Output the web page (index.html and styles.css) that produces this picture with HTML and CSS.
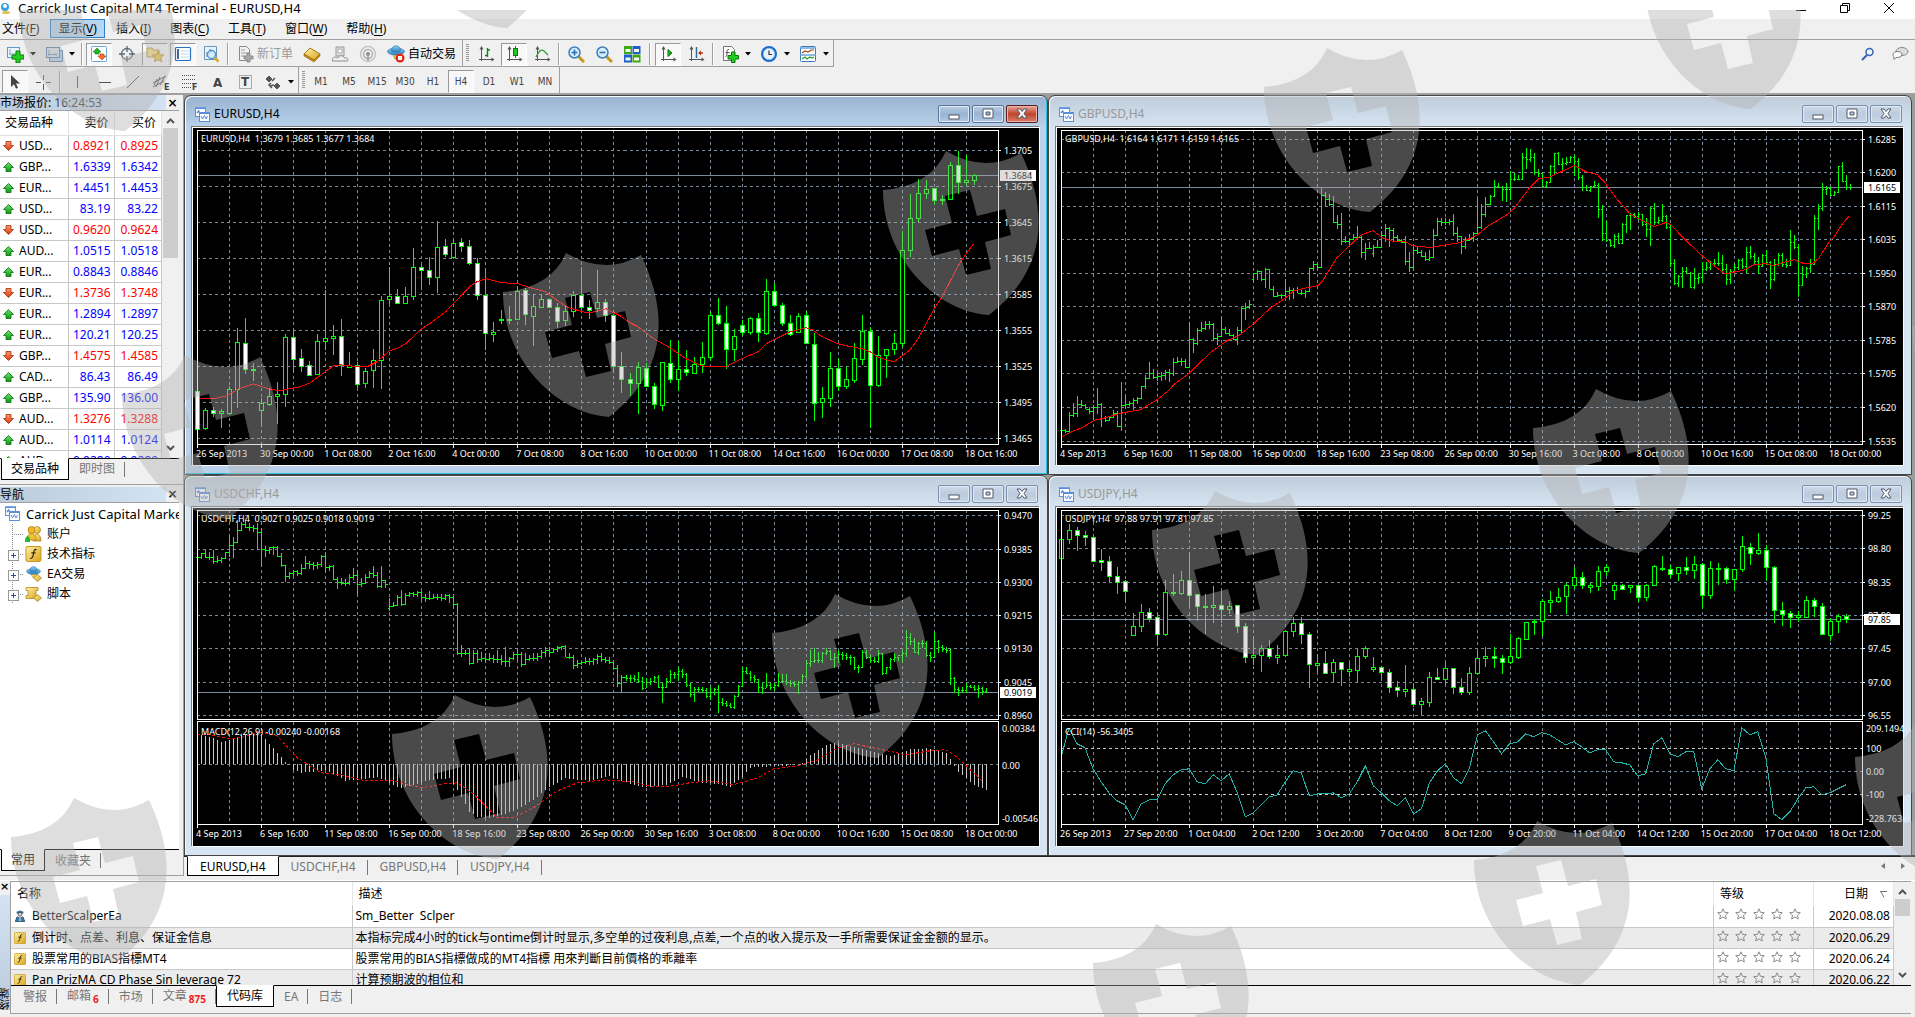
FILE: index.html
```html
<!DOCTYPE html>
<html lang="zh-CN">
<head>
<meta charset="utf-8">
<title>Carrick Just Capital MT4 Terminal - EURUSD,H4</title>
<link rel="stylesheet" href="styles.css">
</head>
<body>
<svg class="defs" aria-hidden="true">
  <defs>
    <linearGradient id="gGreen" x1="0" y1="0" x2="0" y2="1"><stop offset="0" stop-color="#6be36b"/><stop offset="1" stop-color="#0a9a12"/></linearGradient>
    <linearGradient id="gRed" x1="0" y1="0" x2="0" y2="1"><stop offset="0" stop-color="#ff9a70"/><stop offset="1" stop-color="#d8380c"/></linearGradient>
    <linearGradient id="gGold" x1="0" y1="0" x2="1" y2="1"><stop offset="0" stop-color="#fff2a8"/><stop offset="1" stop-color="#d9a21a"/></linearGradient>
    <linearGradient id="gBlue" x1="0" y1="0" x2="0" y2="1"><stop offset="0" stop-color="#8fd0f5"/><stop offset="1" stop-color="#2a7fc0"/></linearGradient>
    <symbol id="up" viewBox="0 0 11 10"><path d="M5.500 .5 10.500 5.500H8V9.500H3V5.500H.5Z" fill="url(#gGreen)" stroke="#0a6a10" stroke-width=".8"/></symbol>
    <symbol id="down" viewBox="0 0 11 10"><path d="M5.500 9.500 10.500 4.500H8V.5H3V4.500H.5Z" fill="url(#gRed)" stroke="#a03008" stroke-width=".8"/></symbol>
    <symbol id="star" viewBox="0 0 12 12"><path d="M6 .8 7.500 4.300 11.300 4.700 8.500 7.200 9.300 11 6 9 2.700 11 3.500 7.200 .7 4.700 4.500 4.300Z" fill="none" stroke="#8c8c8c" stroke-width="1"/></symbol>
    <symbol id="charts" viewBox="0 0 15 15"><rect x=".5" y="1.500" width="10" height="8" fill="#fff" stroke="#5a8fe0"/><path d="M0 1h11M2 6l1.500-2 1.500 2" stroke="#5a8fe0" stroke-width="1.500" fill="none"/><rect x="4.500" y="5.500" width="10" height="9" fill="#fff" stroke="#5a8fe0"/><path d="M4 6h11" stroke="#5a8fe0" stroke-width="2"/><path d="M6 9l1.500 3 2-3.500 1.500 3.500 1.500-3" stroke="#5a8fe0" fill="none"/></symbol>
    <symbol id="func" viewBox="0 0 15 15"><rect x=".5" y=".5" width="14" height="14" rx="1.500" fill="url(#gGold)" stroke="#c79a20"/><path d="M10.500 3.500c-2-.8-2.600.6-3 3.500s-1 5-3 4.500M5.500 6.500h4" stroke="#3a2c00" stroke-width="1.200" fill="none"/></symbol>
    <symbol id="hat" viewBox="0 0 18 17"><path d="M5 8h9l-2 5-4 1z" fill="#f3cf5a" stroke="#b98d1c" stroke-width=".7"/><ellipse cx="9" cy="6.500" rx="8.500" ry="3.500" fill="url(#gBlue)" stroke="#2a6fa8" stroke-width=".6"/><path d="M4.500 6c0-7 9-7 9 0-2 1.500-7 1.500-9 0z" fill="url(#gBlue)" stroke="#2a6fa8" stroke-width=".6"/></symbol>
    <symbol id="caret" viewBox="0 0 7 4"><path d="M0 0h6L3 3.500Z" fill="#000"/></symbol>
    <symbol id="axes" viewBox="0 0 18 18"><path d="M4.500 3v13M2 14.500h14" stroke="#555"/><path d="M4.500 1 2.500 4.500h4zM17.500 14.500l-3-2v4z" fill="#555"/></symbol>
    <symbol id="expert" viewBox="0 0 14 14"><path d="M3 2l4-1.500L11 2v2H3z" fill="#2c6f99"/><circle cx="7" cy="5" r="2.200" fill="#f0d8b8" stroke="#345"/><path d="M1.500 13.500 3.500 8l3.500 1.500L10.500 8l2 5.500z" fill="#3c7ca4" stroke="#234f6c"/><path d="M7 9v4" stroke="#fff"/></symbol>
    <path id="shield" fill-rule="evenodd" d="M0 0Q48-4 63-39Q102-16 138-37C170 30 158 85 106 125C55 122 0 70 0 0ZM62 6 69 33 42 40 49 66 76 59 83 85 108 79 102 52 128 45 122 19 94 26 87 0Z"/>
  </defs>
</svg>

<header class="titlebar">
  <svg class="app-icon" viewBox="0 0 12 14"><circle cx="5" cy="6" r="4" fill="#3aa0d8"/><circle cx="5" cy="5" r="2" fill="#fff"/><ellipse cx="6" cy="11.500" rx="4" ry="1.500" fill="#e0c04a"/></svg>
  <h1>Carrick Just Capital MT4 Terminal - EURUSD,H4</h1>
  <div class="caption">
    <button aria-label="最小化"><svg viewBox="0 0 10 10"><path d="M0 7.500h10"/></svg></button>
    <button aria-label="还原"><svg viewBox="0 0 10 10"><path d="M.5 2.500h7v7h-7zM2.500 2.500v-2h7v7h-2"/></svg></button>
    <button aria-label="关闭"><svg viewBox="0 0 10 10"><path d="M0 0l10 10M10 0 0 10"/></svg></button>
  </div>
</header>

<nav class="menu">
  <button>文件(<u>F</u>)</button><button class="open">显示(<u>V</u>)</button><button>插入(<u>I</u>)</button><button>图表(<u>C</u>)</button><button>工具(<u>T</u>)</button><button>窗口(<u>W</u>)</button><button>帮助(<u>H</u>)</button>
</nav>

<div class="bar">
  <div class="strip">
    <button class="tool drop" aria-label="新图表"><svg class="ic" viewBox="0 0 18 18"><rect x="1.500" y="2.500" width="12" height="10" fill="#eef6fc" stroke="#5a9ccc"/><path d="M4 4v6M3 9h7" stroke="#7aa8c8"/><path d="M10 6h4v4h4v4h-4v4h-4v-4H6v-4h4z" fill="#22d022" stroke="#087a08"/></svg><svg class="caret"><use href="#caret"/></svg></button>
    <button class="tool drop" aria-label="模板组"><svg class="ic" viewBox="0 0 18 18"><path d="M4.500 5.500h13v11h-13z" fill="#bcd2e6" stroke="#5a86b0"/><rect x="1.500" y="2.500" width="13" height="10" fill="#d8e6f2" stroke="#5a86b0"/><path d="M4 5v6M3 9.500h9M11 8v3" stroke="#7a98b4"/></svg><svg class="caret"><use href="#caret"/></svg></button>
    <i class="sep"></i>
    <button class="tool on" aria-label="市场报价"><svg class="ic" viewBox="0 0 18 18"><rect x="1.500" y="1.500" width="15" height="15" rx="1" fill="#fff" stroke="#6aa8dc"/><path d="M7 3l4 4H9v2H5V7H3z" fill="#25b825" stroke="#087a08" stroke-width=".6"/><path d="M12 15l4-4h-2V9h-4v2H8z" fill="#ff6a30" stroke="#b03808" stroke-width=".6"/></svg></button>
    <button class="tool" aria-label="数据窗口"><svg class="ic" viewBox="0 0 18 18"><circle cx="9" cy="9" r="5.500" fill="none" stroke="#5a6a74" stroke-width="1.300"/><path d="M9 1v6M9 11v6M1 9h6M11 9h6" stroke="#5a6a74" stroke-width="1.300"/></svg></button>
    <button class="tool on" aria-label="导航"><svg class="ic" viewBox="0 0 18 18"><path d="M1 3h5l1 2h6v7H1z" fill="#f8df8c" stroke="#b89a3c"/><path d="M12 6l1.700 3.700 4 .4-3 2.600 1 4L12 14.600 8.400 16.700l1-4-3-2.600 4-.4z" fill="#f6c648" stroke="#a88420" stroke-width=".8"/></svg></button>
    <button class="tool on" aria-label="终端"><svg class="ic" viewBox="0 0 18 18"><rect x="1.500" y="2.500" width="15" height="13" rx="1" fill="#fff" stroke="#2a70bc" stroke-width="1.200"/><path d="M4 4v10" stroke="#1c3f7e" stroke-width="1.600"/><path d="M7 6h8M7 9h8M7 12h8" stroke="#c0d4ea"/></svg></button>
    <button class="tool" aria-label="策略测试"><svg class="ic" viewBox="0 0 18 18"><path d="M2.500 1.500h12v13h-12z" fill="#e8f2fa" stroke="#6a94b4"/><path d="M5 12V7M8 9V4" stroke="#4a7aa4"/><path d="M12.500 12.500l4 4" stroke="#d8a828" stroke-width="2.600"/><circle cx="9.500" cy="9.500" r="4" fill="#d4ecfa" fill-opacity=".8" stroke="#4a94cc" stroke-width="1.300"/></svg></button>
    <i class="sep"></i>
    <button class="tool text off"><svg class="ic" viewBox="0 0 18 18"><path d="M3.500 1.500h7l3 3v11h-10z" fill="#f2f2f2" stroke="#8a8a8a"/><path d="M5 5h4M5 8h6M5 11h4" stroke="#9a9a9a"/><path d="M11 8h3v3h3v3h-3v3h-3v-3H8v-3h3z" fill="#a8a8a8" stroke="#787878" stroke-width=".7"/></svg>新订单</button>
    <button class="tool" aria-label="MetaEditor"><svg class="ic" viewBox="0 0 18 18"><path d="M1 9l6-6 10 6-6 6z" fill="url(#gGold)" stroke="#a87a10"/><path d="M1 9v2l10 6 6-6V9l-6 6z" fill="#c88c14" stroke="#946808" stroke-width=".6"/></svg></button>
    <button class="tool" aria-label="社区"><svg class="ic" viewBox="0 0 18 18"><path d="M5 2h8v9H5z" fill="#dedede" stroke="#9a9a9a"/><path d="M7 4h4v4H7z" fill="#fff" stroke="#aaa"/><path d="M1.500 16c-1-4 3-5 5-3 2-3 6-3 7 0 3-.5 4 1 3 3z" fill="#eee" stroke="#8c8c8c"/></svg></button>
    <button class="tool" aria-label="信号"><svg class="ic" viewBox="0 0 18 18"><circle cx="9" cy="9" r="7.500" fill="none" stroke="#c4c4c4" stroke-width="1.500"/><circle cx="9" cy="9" r="4.500" fill="none" stroke="#b0b0b0" stroke-width="1.500"/><circle cx="9" cy="9" r="2" fill="#888"/><path d="M9 9v7" stroke="#999" stroke-width="1.500"/></svg></button>
    <button class="tool text auto"><svg class="ic" viewBox="0 0 18 18"><use href="#hat" width="18" height="17"/><circle cx="13" cy="13" r="4.500" fill="#e02a14"/><rect x="11" y="11" width="4" height="4" fill="#fff"/></svg>自动交易</button>
  </div>
  <div class="strip grip">
    <button class="tool" aria-label="柱状图"><svg class="ic" viewBox="0 0 18 18"><use href="#axes"/><path d="M10.500 3v9M8 10.500h2.500M10.500 5h2.500" stroke="#0a8a0a" stroke-width="1.400"/></svg></button>
    <button class="tool on" aria-label="蜡烛图"><svg class="ic" viewBox="0 0 18 18"><use href="#axes"/><path d="M10.500 1v12" stroke="#0a8a0a"/><rect x="8.500" y="3.500" width="4" height="7" fill="#22c822" stroke="#0a7a0a"/></svg></button>
    <button class="tool" aria-label="折线图"><svg class="ic" viewBox="0 0 18 18"><use href="#axes"/><path d="M3 12c3-7 6-8 8-6l4 4" stroke="#3a9a3a" stroke-width="1.300" fill="none"/></svg></button>
    <i class="sep"></i>
    <button class="tool" aria-label="放大"><svg class="ic" viewBox="0 0 18 18"><path d="M11 11l6 6" stroke="#c8981c" stroke-width="3"/><circle cx="7.500" cy="7.500" r="5.500" fill="#d8eefc" stroke="#3c7fbc" stroke-width="1.500"/><path d="M7.500 4.500v6M4.500 7.500h6" stroke="#2c6fae" stroke-width="1.600"/></svg></button>
    <button class="tool" aria-label="缩小"><svg class="ic" viewBox="0 0 18 18"><path d="M11 11l6 6" stroke="#c8981c" stroke-width="3"/><circle cx="7.500" cy="7.500" r="5.500" fill="#d8eefc" stroke="#3c7fbc" stroke-width="1.500"/><path d="M4.500 7.500h6" stroke="#2c6fae" stroke-width="1.600"/></svg></button>
    <button class="tool" aria-label="平铺窗口"><svg class="ic" viewBox="0 0 18 18"><path d="M1 1h8v8H1zM9.500 9.500h8v8h-8z" fill="#3fa614"/><path d="M9.500 1h8v8h-8zM1 9.500h8v8H1z" fill="#1f5fc8"/><path d="M2.500 4h5v3h-5zM11 4h5v3h-5zM2.500 12.500h5v3h-5zM11 12.500h5v3h-5z" fill="#f4f8ee"/></svg></button>
    <i class="sep wide"></i>
    <button class="tool on" aria-label="自动滚动"><svg class="ic" viewBox="0 0 18 18"><use href="#axes"/><path d="M9 4.500l4 3.500-4 3.500z" fill="#22b022" stroke="#087a08"/></svg></button>
    <button class="tool" aria-label="图表平移"><svg class="ic" viewBox="0 0 18 18"><use href="#axes"/><path d="M9.500 2v11" stroke="#2c6f9c" stroke-width="1.500"/><path d="M16 8h-4" stroke="#b03808" stroke-width="1.500"/><path d="M14 5.500v5L11 8z" fill="#b03808"/></svg></button>
    <i class="sep"></i>
    <button class="tool drop" aria-label="技术指标"><svg class="ic" viewBox="0 0 18 18"><path d="M2.500 1.500h8l3 3v11h-11z" fill="#fff" stroke="#777"/><path d="M8 4.500c-2-.5-2 1-2 3s0 4-1.500 4M4.500 7.500h4" stroke="#555" fill="none"/><path d="M10.500 7h3.500v3.500h3.500V14H14v3.500h-3.500V14H7v-3.500h3.500z" fill="#22d022" stroke="#087a08"/></svg><svg class="caret"><use href="#caret"/></svg></button>
    <button class="tool drop" aria-label="时段"><svg class="ic" viewBox="0 0 18 18"><circle cx="9" cy="9" r="8" fill="#1668c8"/><circle cx="9" cy="9" r="5.700" fill="#e8f2fa" stroke="#8ac0f0"/><path d="M9 5.500V9.500h3" stroke="#333" stroke-width="1.200" fill="none"/></svg><svg class="caret"><use href="#caret"/></svg></button>
    <button class="tool drop" aria-label="模板"><svg class="ic" viewBox="0 0 18 18"><rect x="1.500" y="1.500" width="15" height="15" rx="1" fill="#fff" stroke="#3a7abc"/><path d="M1 3h16M1 10h16" stroke="#6aa4dc" stroke-width="1.500"/><path d="M3 8l3-2 3 1 3-2h3" stroke="#a84020" fill="none" stroke-width="1.200"/><path d="M3 14l3-2 2 2 3-2 2 1 2-1" stroke="#2a9a2a" fill="none" stroke-width="1.200"/></svg><svg class="caret"><use href="#caret"/></svg></button>
  </div>
  <div class="right-tools">
    <button class="tool" aria-label="搜索"><svg class="ic" viewBox="0 0 18 18"><path d="M8 10l-5 5" stroke="#3a62b8" stroke-width="2.200"/><circle cx="10.500" cy="7" r="3.500" fill="#eef4fc" stroke="#3a62b8" stroke-width="1.500"/></svg></button>
    <button class="tool" aria-label="聊天"><svg class="ic" viewBox="0 0 18 18"><ellipse cx="11" cy="6.500" rx="6" ry="4" fill="#ddd" stroke="#888"/><path d="M2 9.500c0-4 9-4 9 0 0 3-4 3-6 3l-2 2v-2.500c-1-.8-1-1.500-1-2.500z" fill="#fafafa" stroke="#777"/></svg></button>
  </div>
</div>

<div class="bar second">
  <div class="strip lines">
    <button class="tool on" aria-label="光标"><svg class="ic" viewBox="0 0 18 18"><path d="M5 2v12l3-2.700 2 4.500 2-1-2-4.300h4z" fill="#444"/></svg></button>
    <button class="tool" aria-label="十字线"><svg class="ic" viewBox="0 0 18 18"><path d="M9.500 2v5M9.500 11v6M2 9.500h5M12 9.500h5" stroke="#555"/></svg></button>
    <i class="sep"></i>
    <button class="tool" aria-label="垂直线"><svg class="ic" viewBox="0 0 18 18"><path d="M9.500 3v12" stroke="#555"/></svg></button>
    <button class="tool" aria-label="水平线"><svg class="ic" viewBox="0 0 18 18"><path d="M3 9.500h12" stroke="#555"/></svg></button>
    <button class="tool" aria-label="趋势线"><svg class="ic" viewBox="0 0 18 18"><path d="M3 15 15 3" stroke="#555"/></svg></button>
    <button class="tool" aria-label="通道"><svg class="ic" viewBox="0 0 18 18"><path d="M1 10 14 3M1 14 12 8M4 14 8 4M8 12l5-9M2 12l3-6" stroke="#555"/><text x="12" y="17">E</text></svg></button>
    <button class="tool" aria-label="斐波那契"><svg class="ic" viewBox="0 0 18 18"><path d="M2 2.500h14M2 6.500h14M2 10.500h14M2 14.500h9" stroke="#555" stroke-dasharray="1 1"/><text x="12" y="17">F</text></svg></button>
    <button class="tool" aria-label="文字"><svg class="ic" viewBox="0 0 18 18"><text class="glyph" x="5" y="14">A</text></svg></button>
    <button class="tool" aria-label="文字标签"><svg class="ic" viewBox="0 0 18 18"><rect x="3.500" y="2.500" width="12" height="13" fill="none" stroke="#666" stroke-dasharray="1 1"/><text class="glyph" x="5" y="13">T</text></svg></button>
    <button class="tool drop" aria-label="箭头"><svg class="ic" viewBox="0 0 18 18"><path d="M5 3l3 3-3 3-3-3zM13 10l3 3-3 3-3-3z" fill="#555" stroke="#555"/><path d="M8 8l3-3M6 13l4-1M8 15l-3-3 2-2" stroke="#555" stroke-width="1.500" fill="none"/></svg><svg class="caret"><use href="#caret"/></svg></button>
  </div>
  <div class="strip grip periods">
    <button class="tool">M1</button><button class="tool">M5</button><button class="tool">M15</button><button class="tool">M30</button><button class="tool">H1</button><button class="tool on">H4</button><button class="tool">D1</button><button class="tool">W1</button><button class="tool">MN</button>
  </div>
</div>

<main class="work">
  <aside class="side">
    <section class="dock market">
      <header class="dock-head"><h2>市场报价: <span>16:24:53</span></h2><button aria-label="关闭">×</button></header>
      <div class="scroller">
        <div class="clip">
          <table class="quotes">
            <colgroup><col class="c-name"><col class="c-bid"><col class="c-ask"></colgroup>
            <thead><tr><th>交易品种</th><th>卖价</th><th>买价</th></tr></thead>
            <tbody>
              <tr class="dn"><td><svg><use href="#down"/></svg>USD...</td><td>0.8921</td><td>0.8925</td></tr>
              <tr><td><svg><use href="#up"/></svg>GBP...</td><td>1.6339</td><td>1.6342</td></tr>
              <tr><td><svg><use href="#up"/></svg>EUR...</td><td>1.4451</td><td>1.4453</td></tr>
              <tr><td><svg><use href="#up"/></svg>USD...</td><td>83.19</td><td>83.22</td></tr>
              <tr class="dn"><td><svg><use href="#down"/></svg>USD...</td><td>0.9620</td><td>0.9624</td></tr>
              <tr><td><svg><use href="#up"/></svg>AUD...</td><td>1.0515</td><td>1.0518</td></tr>
              <tr><td><svg><use href="#up"/></svg>EUR...</td><td>0.8843</td><td>0.8846</td></tr>
              <tr class="dn"><td><svg><use href="#down"/></svg>EUR...</td><td>1.3736</td><td>1.3748</td></tr>
              <tr><td><svg><use href="#up"/></svg>EUR...</td><td>1.2894</td><td>1.2897</td></tr>
              <tr><td><svg><use href="#up"/></svg>EUR...</td><td>120.21</td><td>120.25</td></tr>
              <tr class="dn"><td><svg><use href="#down"/></svg>GBP...</td><td>1.4575</td><td>1.4585</td></tr>
              <tr><td><svg><use href="#up"/></svg>CAD...</td><td>86.43</td><td>86.49</td></tr>
              <tr><td><svg><use href="#up"/></svg>GBP...</td><td>135.90</td><td>136.00</td></tr>
              <tr class="dn"><td><svg><use href="#down"/></svg>AUD...</td><td>1.3276</td><td>1.3288</td></tr>
              <tr><td><svg><use href="#up"/></svg>AUD...</td><td>1.0114</td><td>1.0124</td></tr>
              <tr><td><svg><use href="#up"/></svg>AUD...</td><td>0.9280</td><td>0.9289</td></tr>
            </tbody>
          </table>
        </div>
        <div class="vbar"><svg viewBox="0 0 9 6"><path d="M1 5l3.500-3.500L8 5"/></svg><i class="thumb"></i><svg class="end" viewBox="0 0 9 6"><path d="M1 1l3.500 3.500L8 1"/></svg></div>
      </div>
      <div class="tabs"><button class="active">交易品种</button><button>即时图</button></div>
    </section>
    <section class="dock navi">
      <header class="dock-head"><h2>导航</h2><button aria-label="关闭">×</button></header>
      <ul class="tree">
        <li class="root"><svg class="ti"><use href="#charts"/></svg>Carrick Just Capital Markets</li>
        <li><i class="node leaf"></i><svg class="ti" viewBox="0 0 17 16"><circle cx="12" cy="4" r="3.500" fill="url(#gGold)" stroke="#a87a10" stroke-width=".7"/><path d="M8 15c0-9 8-9 8 0z" fill="url(#gGold)" stroke="#a87a10" stroke-width=".7"/><circle cx="6.500" cy="4" r="3.500" fill="#f0b820" stroke="#a87a10" stroke-width=".7"/><path d="M2 14c0-9 9-9 9 0z" fill="#f0c030" stroke="#a87a10" stroke-width=".7"/><path d="M0 15c0-6 5-6 5-1v2H0z" fill="#22b82a"/></svg>账户</li>
        <li><i class="node plus"></i><svg class="ti"><use href="#func"/></svg>技术指标</li>
        <li><i class="node plus"></i><svg class="ti" viewBox="0 0 17 16"><use href="#hat" width="17" height="14"/><path d="M12.500 8.500l4 3.500-4 3.500-4-3.500z" fill="url(#gGold)" stroke="#a87a10" stroke-width=".7"/></svg>EA交易</li>
        <li><i class="node plus"></i><svg class="ti" viewBox="0 0 17 16"><path d="M1 1.500h12v3h-2v5h2v3H1v-3h2v-5H1z" fill="url(#gGold)" stroke="#b08a20" stroke-width=".8"/><path d="M12.500 8.500l4 3.500-4 3.500-4-3.500z" fill="url(#gGold)" stroke="#a87a10" stroke-width=".7"/></svg>脚本</li>
      </ul>
      <div class="tabs"><button class="active">常用</button><button>收藏夹</button></div>
    </section>
  </aside>

  <section class="desk">
    <div class="windows">
      <article class="win active"><header><svg class="wi"><use href="#charts"/></svg><h2>EURUSD,H4</h2><button aria-label="最小化"><svg viewBox="0 0 12 12"><rect x="1" y="7" width="10" height="4"/></svg></button><button aria-label="最大化"><svg viewBox="0 0 12 12"><path d="M1 1h10v9H1zM4 4h4v3H4z"/></svg></button><button class="x" aria-label="关闭"><svg viewBox="0 0 12 12"><path d="M1 1h3l2 2.500L8 1h3L8 5.500 11 10H8L6 7.500 4 10H1l3-4.500z"/></svg></button></header><svg class="chart" id="eurusd" viewBox="0 0 845 337" preserveAspectRatio="xMinYMin meet"></svg></article>
      <article class="win"><header><svg class="wi"><use href="#charts"/></svg><h2>GBPUSD,H4</h2><button aria-label="最小化"><svg viewBox="0 0 12 12"><rect x="1" y="7" width="10" height="4"/></svg></button><button aria-label="最大化"><svg viewBox="0 0 12 12"><path d="M1 1h10v9H1zM4 4h4v3H4z"/></svg></button><button class="x" aria-label="关闭"><svg viewBox="0 0 12 12"><path d="M1 1h3l2 2.500L8 1h3L8 5.500 11 10H8L6 7.500 4 10H1l3-4.500z"/></svg></button></header><svg class="chart" id="gbpusd" viewBox="0 0 845 337" preserveAspectRatio="xMinYMin meet"></svg></article>
      <article class="win"><header><svg class="wi"><use href="#charts"/></svg><h2>USDCHF,H4</h2><button aria-label="最小化"><svg viewBox="0 0 12 12"><rect x="1" y="7" width="10" height="4"/></svg></button><button aria-label="最大化"><svg viewBox="0 0 12 12"><path d="M1 1h10v9H1zM4 4h4v3H4z"/></svg></button><button class="x" aria-label="关闭"><svg viewBox="0 0 12 12"><path d="M1 1h3l2 2.500L8 1h3L8 5.500 11 10H8L6 7.500 4 10H1l3-4.500z"/></svg></button></header><svg class="chart" id="usdchf" viewBox="0 0 845 337" preserveAspectRatio="xMinYMin meet"></svg></article>
      <article class="win"><header><svg class="wi"><use href="#charts"/></svg><h2>USDJPY,H4</h2><button aria-label="最小化"><svg viewBox="0 0 12 12"><rect x="1" y="7" width="10" height="4"/></svg></button><button aria-label="最大化"><svg viewBox="0 0 12 12"><path d="M1 1h10v9H1zM4 4h4v3H4z"/></svg></button><button class="x" aria-label="关闭"><svg viewBox="0 0 12 12"><path d="M1 1h3l2 2.500L8 1h3L8 5.500 11 10H8L6 7.500 4 10H1l3-4.500z"/></svg></button></header><svg class="chart" id="usdjpy" viewBox="0 0 845 337" preserveAspectRatio="xMinYMin meet"></svg></article>
    </div>
    <div class="tabs desk-tabs"><button class="active">EURUSD,H4</button><button>USDCHF,H4</button><button>GBPUSD,H4</button><button>USDJPY,H4</button><span class="pager"><svg viewBox="0 0 4 6"><path d="M4 0v6L0 3z"/></svg><svg viewBox="0 0 4 6"><path d="M0 0v6l4-3z"/></svg></span></div>
  </section>
</main>

<section class="terminal">
  <div class="spine"><button aria-label="关闭">×</button><span>终端</span></div>
  <div class="term-body">
    <div class="scroller">
      <div class="clip">
        <table class="library">
          <colgroup><col class="c-title"><col><col class="c-rate"><col class="c-date"></colgroup>
          <thead><tr><th>名称</th><th>描述</th><th>等级</th><th>日期<svg viewBox="0 0 7 7"><path d="M0 .5h7M1 1l3 5.500"/></svg></th></tr></thead>
          <tbody>
            <tr><td><svg><use href="#expert"/></svg>BetterScalperEa</td><td class="pre">Sm_Better  Sclper</td><td class="stars"><svg><use href="#star"/></svg><svg><use href="#star"/></svg><svg><use href="#star"/></svg><svg><use href="#star"/></svg><svg><use href="#star"/></svg></td><td>2020.08.08</td></tr>
            <tr><td><svg><use href="#func"/></svg>倒计时、点差、利息、保证金信息</td><td>本指标完成4小时的tick与ontime倒计时显示,多空单的过夜利息,点差,一个点的收入提示及一手所需要保证金金额的显示。</td><td class="stars"><svg><use href="#star"/></svg><svg><use href="#star"/></svg><svg><use href="#star"/></svg><svg><use href="#star"/></svg><svg><use href="#star"/></svg></td><td>2020.06.29</td></tr>
            <tr><td><svg><use href="#func"/></svg>股票常用的BIAS指標MT4</td><td>股票常用的BIAS指標做成的MT4指標 用來判斷目前價格的乖離率</td><td class="stars"><svg><use href="#star"/></svg><svg><use href="#star"/></svg><svg><use href="#star"/></svg><svg><use href="#star"/></svg><svg><use href="#star"/></svg></td><td>2020.06.24</td></tr>
            <tr><td><svg><use href="#func"/></svg>Pan PrizMA CD Phase Sin leverage 72</td><td>计算预期波的相位和</td><td class="stars"><svg><use href="#star"/></svg><svg><use href="#star"/></svg><svg><use href="#star"/></svg><svg><use href="#star"/></svg><svg><use href="#star"/></svg></td><td>2020.06.22</td></tr>
          </tbody>
        </table>
      </div>
      <div class="vbar"><svg viewBox="0 0 9 6"><path d="M1 5l3.500-3.500L8 5"/></svg><i class="thumb"></i><svg class="end" viewBox="0 0 9 6"><path d="M1 1l3.500 3.500L8 1"/></svg></div>
    </div>
    <div class="tabs term-tabs"><button>警报</button><button>邮箱<b>6</b></button><button>市场</button><button>文章<b>875</b></button><button class="active">代码库</button><button>EA</button><button>日志</button></div>
  </div>
</section>

<svg class="watermark" aria-hidden="true">
  <use href="#shield" x="19" y="-4"/><use href="#shield" x="401" y="-107"/>
  <use href="#shield" x="122" y="384"/><use href="#shield" x="503" y="282"/><use href="#shield" x="883" y="180"/><use href="#shield" x="1264" y="77"/><use href="#shield" x="1645" y="-26"/>
  <use href="#shield" x="11" y="827"/><use href="#shield" x="392" y="724"/><use href="#shield" x="772" y="623"/><use href="#shield" x="1152" y="520"/><use href="#shield" x="1533" y="418"/><use href="#shield" x="1912" y="316"/>
  <use href="#shield" x="1093" y="953"/><use href="#shield" x="1474" y="850"/><use href="#shield" x="1855" y="747"/>
</svg>
<script src="charts.js"></script>
</body>
</html>
```

FILE: styles.css
```css
* { box-sizing: border-box; }
html, body { height: 100%; }
body {
  margin: 0;
  display: flex;
  flex-direction: column;
  min-height: 100vh;
  position: relative;
  overflow: hidden;
  background: #f0f0f0;
  color: #000;
  font: 12px/16px "Noto Sans", "Noto Sans CJK SC", sans-serif;
}
button {
  margin: 0;
  padding: 0;
  border: 0;
  background: none;
  color: inherit;
  font: inherit;
  white-space: nowrap;
}
h1, h2, ul { margin: 0; padding: 0; font: inherit; list-style: none; }
svg { display: block; flex: none; }
.defs { position: absolute; width: 0; height: 0; }

/* Title bar and menu */
.titlebar {
  display: flex;
  align-items: center;
  height: 19px;
  padding-bottom: 3px;
  background: #fff;
}
.titlebar h1 { font-size: 13px; }
.app-icon { width: 12px; height: 14px; margin-right: 6px; }
.caption { display: flex; gap: 24px; margin-left: auto; padding-right: 16px; }
.caption button { width: 20px; height: 16px; display: grid; place-items: center; }
.caption svg { width: 10px; height: 10px; fill: none; stroke: #000; }
.menu {
  display: flex;
  gap: 3px;
  height: 21px;
  padding-bottom: 1px;
  margin-left: -6px;
  border-bottom: 1px solid #a0a0a0;
}
.menu button { padding: 0 7px; border: 1px solid transparent; line-height: 17px; }
.menu u { text-underline-offset: 2px; }
.menu .open { background: #b8d6f0; border-color: #2a80d0; }

/* Tool bars */
.bar { display: flex; height: 27px; }
.bar.second { height: 28px; border-bottom: 2px solid #a0a0a0; }
.strip {
  display: flex;
  align-items: center;
  padding: 2px 1px 0;
  border-right: 1px solid #a0a0a0;
  border-bottom: 1px solid #a0a0a0;
}
.second .strip { border-bottom: 0; padding-top: 3px; }
.strip.grip { padding-left: 9px; padding-right: 0; position: relative; }
.grip::before {
  content: "";
  position: absolute;
  left: 3px;
  top: 4px;
  bottom: 4px;
  width: 3px;
  background: repeating-linear-gradient(#999 0 1px, #f0f0f0 1px 2px);
}
.tool {
  width: 28px;
  height: 23px;
  display: flex;
  align-items: center;
  justify-content: center;
}
.tool .ic { width: 18px; height: 18px; }
.tool .ic text { font: bold 8px "DejaVu Sans", sans-serif; fill: #444; }
.tool .ic .glyph { font: bold 12px "DejaVu Sans", sans-serif; }
.tool.on {
  width: 26px;
  margin: 0 1px;
  border: 1px solid #fff;
  border-top-color: #999;
  border-left-color: #999;
  background: #f8f8f8;
}
.drop { width: 39px; justify-content: flex-start; padding-left: 5px; gap: 6px; }
.caret { width: 7px; height: 4px; }
.sep { width: 2px; height: 22px; margin: 0 2px; border-left: 1px solid #a0a0a0; border-right: 1px solid #fff; }
.sep.wide { margin: 0 3px; }
.tool.text { width: auto; padding: 0 5px; gap: 3px; }
.off { color: #9a9a9a; }
.right-tools { display: flex; align-items: center; gap: 4px; margin-left: auto; padding-right: 1px; }
.second .lines { padding-left: 1px; padding-right: 0; }
.second .periods { padding-left: 8px; }
.periods { font: 10px/14px "DejaVu Sans Condensed", "DejaVu Sans", sans-serif; color: #444; }

/* Work area */
.work { display: flex; flex: 1; min-height: 0; }
.side { width: 184px; display: flex; flex-direction: column; }
.dock {
  display: flex;
  flex-direction: column;
  border-right: 1px solid #a0a0a0;
  border-bottom: 1px solid #a0a0a0;
  padding-right: 4px;
  padding-bottom: 4px;
}
.market { flex: 391 1 0; min-height: 0; }
.navi { flex: 391 1 0; min-height: 0; padding-top: 2px; margin-bottom: 4px; }
.dock-head {
  display: flex;
  height: 16px;
  border-bottom: 1px solid #a0a0a0;
}
.dock-head h2 { flex: 1; background: linear-gradient(90deg, #bccbdb, #d3e3f3); line-height: 15px; }
.dock-head span { color: #444; }
.dock-head button { width: 13px; font: bold 12px/14px "DejaVu Sans", sans-serif; }
.scroller { display: flex; flex: 1; min-height: 0; background: #fff; }
.clip { flex: 1; min-width: 0; overflow: hidden; }
.vbar { width: 17px; padding: 7px 0; background: #f0f0f0; display: flex; flex-direction: column; align-items: center; }
.vbar svg { width: 9px; height: 6px; fill: none; stroke: #555; stroke-width: 2; }
.vbar .end { margin-top: auto; }
.thumb { width: 15px; height: 130px; margin-top: 4px; background: #cdcdcd; }
table { width: 100%; border-collapse: collapse; table-layout: fixed; }
th { font-weight: normal; text-align: left; }
.quotes tr { height: 21px; }
.quotes thead tr { height: 24px; }
.quotes th, .quotes td { padding: 0 3px 0 0; border-bottom: 1px solid #c8c8c8; border-right: 1px solid #c8c8c8; white-space: nowrap; overflow: hidden; }
.quotes th { border-color: #e0e0e0; }
.quotes th + th { padding-right: 5px; }
.quotes th + th, .quotes td + td { text-align: right; }
.quotes th:first-child { padding-left: 5px; }
.quotes td + td { color: #00f; }
.quotes .dn td + td { color: #f00; }
.quotes td:first-child { padding-left: 3px; }
.quotes svg { display: inline-block; width: 11px; height: 10px; margin-right: 5px; vertical-align: -1px; }
.c-name { width: 68px; }
.c-bid { width: 46px; }

/* Sheet tabs */
.tabs { display: flex; height: 22px; padding-left: 1px; border-top: 1px solid #000; color: #777; background: #f0f0f0; }
.tabs button { position: relative; padding: 0 10px; line-height: 20px; }
.tabs button:not(.active)::after {
  content: "";
  position: absolute;
  right: 0;
  top: 3px;
  height: 15px;
  border-right: 1px solid #777;
}
.tabs .active { margin-top: -1px; border: 1px solid #000; border-top-color: #fff; background: #fff; color: #000; }
.dock .tabs .active { padding: 0 9px; }

/* Navigator tree */
.tree { flex: 1; padding-top: 1px; background: #fff; overflow: hidden; }
.tree li { display: flex; align-items: center; height: 20px; white-space: nowrap; }
.tree .root { padding-left: 5px; font-size: 13px; }
.ti { width: 17px; height: 16px; margin-right: 5px; }
.root .ti { width: 15px; height: 15px; margin-right: 6px; }
.node {
  width: 25px;
  height: 20px;
  position: relative;
  background:
    repeating-linear-gradient(#888 0 1px, transparent 1px 2px) 12px 0 / 1px 20px no-repeat,
    repeating-linear-gradient(90deg, #888 0 1px, transparent 1px 2px) 12px 10px / 11px 1px no-repeat;
}
.node.plus::before {
  content: "";
  position: absolute;
  left: 8px;
  top: 6px;
  width: 9px;
  height: 9px;
  border: 1px solid #999;
  background:
    linear-gradient(#2a4a9a, #2a4a9a) center / 5px 1px no-repeat,
    linear-gradient(#2a4a9a, #2a4a9a) center / 1px 5px no-repeat,
    #fff;
}

/* Chart windows */
.desk { flex: 1; min-width: 0; display: flex; flex-direction: column; }
.windows {
  flex: 1;
  min-height: 0;
  display: grid;
  grid-template: 1fr 1fr / 1fr 1fr;
  padding-right: 3px;
  border-bottom: 2px solid #222;
  background: #9c9c9c;
}
.win {
  display: flex;
  flex-direction: column;
  min-width: 0;
  padding: 0 8px 9px;
  border: 1px solid #444;
  border-radius: 7px 7px 0 0;
  box-shadow: inset 1px 1px 0 #f4f8fc;
  background: linear-gradient(#bfccda, #d7e4f2 31px);
}
.win.active { background: linear-gradient(#98b3d0, #b9d1ea 31px); box-shadow: inset 1px 1px 0 #fff, inset -1px -1px 0 #2cc4dc; }
.win header { display: flex; align-items: center; gap: 2px; height: 32px; padding: 4px 1px 0 2px; }
.win h2 { flex: 1; padding: 0 2px; color: #999; }
.win.active h2 { color: #000; }
.wi { width: 15px; height: 15px; }
.win header button {
  width: 32px;
  height: 18px;
  display: grid;
  place-items: center;
  border: 1px solid #7b8fb0;
  border-radius: 2px;
  background: linear-gradient(#ccd9e8, #bccbdd 50%, #c8d6e6);
  box-shadow: inset 0 0 0 1px #dfe9f4;
}
.win header button svg { width: 12px; height: 12px; fill: #fff; fill-rule: evenodd; stroke: #55596a; }
.win.active header button { border-color: #5a7396; background: linear-gradient(#b9cfe6, #98b4d2 50%, #b0cae4); }
.win.active header .x { border-color: #5c1c1c; background: linear-gradient(#e9a99c, #c0432c 50%, #d8806c); box-shadow: inset 0 0 0 1px #eab4a8; }
.chart {
  flex: 1;
  width: 100%;
  min-height: 0;
  background: #000;
  outline: 1px solid #fff;
  box-shadow: -1px -1px 0 1px #777;
  overflow: hidden;
}
.chart text { font: 9px "Noto Sans", sans-serif; fill: #fff; }
.chart .mark { fill: #000; }
.desk-tabs { height: 23px; border-top: 0; padding-left: 3px; }
.desk-tabs button { height: 20px; padding: 0 12px; line-height: 20px; }
.desk-tabs .active { margin-top: -1px; }
.pager { display: flex; gap: 16px; margin: 6px 10px 0 auto; }
.pager svg { width: 4px; height: 6px; fill: #777; }

/* Terminal */
.terminal { display: flex; height: 137px; border-top: 1px solid #fff; }
.spine { width: 10px; display: flex; flex-direction: column; justify-content: space-between; margin-bottom: 7px; background: linear-gradient(#f0f0f0 14px, #d3e3f3 14px, #bccbdb); overflow: hidden; }
.spine button { width: 7px; font: bold 11px/12px "DejaVu Sans", sans-serif; }
.spine span { writing-mode: vertical-rl; transform: rotate(180deg); font-size: 11px; line-height: 10px; }
.term-body { flex: 1; min-width: 0; display: flex; flex-direction: column; margin: 0 4px 3px 0; padding-bottom: 6px; border: 1px solid #a0a0a0; border-right: 0; }
.library tr { height: 21px; }
.library thead tr { height: 24px; }
.library th, .library td { padding: 0 3px; border-right: 1px solid #c8c8c8; border-bottom: 1px solid #c8c8c8; white-space: nowrap; overflow: hidden; }
.library th { padding-left: 6px; border-color: #e8e8e8; border-bottom: 0; }
.library tbody tr:nth-child(even) { background: #ebebeb; }
.library td:first-child svg { display: inline-block; width: 12px; height: 12px; margin-right: 6px; vertical-align: -2px; }
.library .pre { white-space: pre; }
.library th:last-child, .library td:last-child { text-align: right; }
.library th:last-child { padding-right: 6px; }
.library th svg { display: inline-block; width: 7px; height: 7px; margin-left: 12px; fill: none; stroke: #777; }
.c-title { width: 341px; }
.c-rate { width: 100px; }
.c-date { width: 80px; }
.stars svg { display: inline-block; width: 12px; height: 12px; margin-right: 6px; vertical-align: 0; }
.terminal .thumb { height: 17px; }
.term-tabs { padding-left: 2px; }
.term-tabs button { padding: 0 10px; }
.term-tabs b { margin-left: 2px; color: #f02020; font-size: 10px; vertical-align: -3px; }

.watermark {
  position: absolute;
  left: 0;
  top: 10px;
  width: 100%;
  height: calc(100% - 10px);
  overflow: hidden;
  fill: #b1b1b1;
  fill-opacity: 0.42;
  pointer-events: none;
}
```

FILE: charts.js
```js
// Price levels are stored in thirds of a pixel, measured down from the chart's datum.
const level = v => Math.round(v / 3) - 38;
const rows = text => text.trim().split(/\s+/).map(r => r.split(",").map(Number));

const SLATE = "#778899", LIME = "#00ff00";
const LEFT = 4, RIGHT = 804, TOP = 2, BOTTOM = 316;

const line = (x1, y1, x2, y2, stroke, extra = "") =>
  `<path d="M${x1} ${y1}L${x2} ${y2}" stroke="${stroke}" ${extra}/>`;
const label = (x, y, text, cls = "") => `<text x="${x}" y="${y}" class="${cls}" xml:space="preserve">${text}</text>`;

// Each row: high, body top, body bottom, low, filled
function candles(text) {
  return rows(text).map(([hi, top, bot, lo, filled], i) => {
    const x = LEFT + 8 * i, t = level(top), h = Math.max(level(bot) - t, 1);
    return `<path d="M${x + .5} ${level(hi)}V${level(lo)}" stroke="${LIME}"/>` +
      `<rect x="${x - 1.5}" y="${t + .5}" width="4" height="${h}" fill="${filled ? "#fff" : "#000"}" stroke="${LIME}"/>`;
  }).join("");
}

// Each row: high, low, close and, after a gap, open
function bars(text) {
  let d = "", prev;
  rows(text).forEach(([hi, lo, close, open], i) => {
    const x = LEFT + 4 * i + .5;
    const o = level(open || prev || close) + .5, c = level(close) + .5;
    d += `M${x} ${level(hi)}V${level(lo)}M${x - 1.5} ${o}H${x}M${x} ${c}h2`;
    prev = close;
  });
  return `<path d="${d}" stroke="${LIME}" fill="none"/>`;
}

const curve = (text, toX, stroke, extra = "") =>
  `<polyline points="${rows(text).map(([x, y]) => `${toX(x)},${level(y) + .5}`).join(" ")}" fill="none" stroke="${stroke}" ${extra}/>`;

function histogram(text, zero) {
  const pts = rows(text);
  let d = "";
  for (let i = 0, k = 0; i <= 197; i++) {
    while (k < pts.length - 2 && i > pts[k + 1][0]) k++;
    const [a, ya] = pts[k], [b, yb] = pts[k + 1];
    d += `M${LEFT + 4 * i + .5} ${level(zero)}V${level(ya + (yb - ya) * (i - a) / (b - a))}`;
  }
  return `<path d="${d}" stroke="#c8c8c8"/>`;
}

function draw(id, c) {
  const dash = 'stroke-dasharray="3 3"';
  const split = c.sub ? 211 : BOTTOM;
  let s = "";
  for (let x = 36; x < RIGHT; x += 32) {
    s += line(x + .5, TOP, x + .5, split, SLATE, dash);
    if (c.sub) s += line(x + .5, split + 3, x + .5, BOTTOM, SLATE, dash);
  }
  c.prices.forEach(([y]) => { s += line(LEFT, level(y) + .5, RIGHT, level(y) + .5, SLATE, dash); });
  s += line(LEFT, level(c.last[0]) + .5, RIGHT, level(c.last[0]) + .5, SLATE);
  if (c.sub) s += c.sub.lines.map(([y, col]) => line(LEFT, level(y) + .5, RIGHT, level(y) + .5, col, dash)).join("");
  s += c.body;
  s += `<path d="M${LEFT + .5} ${TOP + .5}H${RIGHT + .5}V${split + .5}H${LEFT + .5}Z" fill="none" stroke="#fff"/>`;
  if (c.sub) s += `<path d="M${LEFT + .5} ${split + 2.5}H${RIGHT + .5}V${BOTTOM + .5}H${LEFT + .5}Z" fill="none" stroke="#fff"/>`;
  c.prices.forEach(([y, t]) => {
    s += line(RIGHT, level(y) + .5, RIGHT + 3, level(y) + .5, "#fff") + label(810, level(y) + 4, t);
  });
  if (c.sub) {
    s += c.sub.labels.map(([y, t]) => label(808, level(y) + 4, t)).join("");
    s += label(8, level(782) + 4, c.sub.title);
  }
  s += `<rect x="806" y="${level(c.last[0]) - 5}" width="36" height="11" fill="#fff"/>` + label(810, level(c.last[0]) + 4, c.last[1], "mark");
  c.times.forEach((t, k) => {
    const x = LEFT + 64 * k;
    s += line(x + .5, BOTTOM, x + .5, BOTTOM + 4, "#fff") + label(x - 1, 329, t);
  });
  s += label(8, 14, c.title);
  document.getElementById(id).innerHTML = `<g shape-rendering="crispEdges">${s}</g>`;
}

const third = x => x / 3 - 8;

draw("eurusd", {
  title: "EURUSD,H4  1.3679 1.3685 1.3677 1.3684",
  last: [256, "1.3684"],
  prices: [[181, "1.3705"], [289, "1.3675"], [397, "1.3645"], [505, "1.3615"], [613, "1.3585"], [721, "1.3555"], [829, "1.3525"], [937, "1.3495"], [1045, "1.3465"]],
  times: ["26 Sep 2013", "30 Sep 00:00", "1 Oct 08:00", "2 Oct 16:00", "4 Oct 00:00", "7 Oct 08:00", "8 Oct 16:00", "10 Oct 00:00", "11 Oct 08:00", "14 Oct 16:00", "16 Oct 00:00", "17 Oct 08:00", "18 Oct 16:00"],
  body: candles(`876,903,1017,1019,1 954,961,1015,1019,0 950,961,970,980,1 957,964,970,1013,0 888,898,968,972,0 713,757,898,953,0 684,760,838,853,1 820,838,838,873,0 924,940,959,1001,0 893,918,941,948,0
    876,912,919,1001,0 731,742,913,951,0 717,742,808,849,1 777,805,829,846,1 813,826,855,857,1 731,754,853,855,0 600,745,754,779,0 705,739,745,795,0 687,739,826,858,1 786,826,830,834,0
    816,826,881,893,1 833,843,880,893,0 777,811,841,893,0 618,630,811,896,0 531,619,628,641,0 597,619,638,643,1 591,619,640,641,0 474,532,619,629,0 524,532,541,600,1 501,541,562,584,1
    393,472,562,608,0 446,469,493,501,1 449,458,500,502,0 444,457,469,486,1 450,469,520,524,1 504,520,616,630,1 535,616,730,779,1 696,727,731,756,0 660,688,691,701,0 648,688,691,701,0
    588,604,688,690,0 594,601,673,704,1 613,649,677,768,0 613,628,650,651,0 625,628,652,655,1 640,650,692,713,1 649,664,691,708,0 603,616,664,681,0 531,616,652,660,1 630,652,659,686,1
    540,637,655,665,0 628,637,676,696,1 672,676,829,850,1 786,829,868,909,1 849,868,880,918,1 816,831,878,972,0 819,835,889,890,1 879,889,943,957,1 817,817,946,963,0 750,820,868,879,1
    754,838,868,902,0 780,838,847,857,1 801,822,848,852,0 757,801,823,850,0 667,676,802,812,0 624,676,700,705,1 648,700,778,837,1 717,739,778,813,0 690,706,727,739,1 681,685,727,735,0
    669,685,727,756,1 567,604,730,735,0 579,604,646,650,1 640,646,700,707,1 675,700,731,738,1 670,679,727,730,0 664,676,760,763,1 729,763,940,993,1 891,925,937,984,0 786,835,925,950,0
    804,835,889,902,1 831,867,889,896,0 759,805,871,878,0 675,724,808,825,0 711,724,886,1014,1 738,796,886,890,0 778,778,796,864,0 729,760,778,795,0 423,481,758,772,0 312,385,481,501,0
    266,310,385,396,0 270,298,310,327,0 294,295,331,344,1 315,328,331,345,0 216,226,328,330,0 183,226,277,312,1 196,271,277,289,0 252,256,271,285,0`) +
    curve(`45,923 85,925 125,914 160,895 205,880 240,890 280,899 345,887 375,875 420,844 445,826 465,823 520,829 545,829 575,814 613,780 640,771 665,756 705,718 733,700 781,663 853,588 875,573 901,565 949,577 997,580 1045,593 1080,603 1120,632 1150,650 1190,664 1213,666 1261,655 1285,667 1309,678 1333,696 1357,709 1405,745 1453,771 1501,803 1549,825 1573,829 1621,827 1655,811 1717,783 1741,759 1765,746 1813,724 1837,716 1861,712 1880,716 1909,738 1957,758 1981,766 2029,775 2053,783 2075,798 2101,808 2125,813 2145,799 2173,777 2197,745 2245,655 2269,618 2317,526 2341,488 2363,460`, third, "#f00")
});

draw("gbpusd", {
  title: "GBPUSD,H4  1.6164 1.6171 1.6159 1.6165",
  last: [290, "1.6165"],
  prices: [[146, "1.6285"], [247, "1.6200"], [349, "1.6115"], [448, "1.6035"], [550, "1.5950"], [649, "1.5870"], [751, "1.5785"], [850, "1.5705"], [952, "1.5620"], [1054, "1.5535"]],
  times: ["4 Sep 2013", "6 Sep 16:00", "11 Sep 08:00", "16 Sep 00:00", "18 Sep 16:00", "23 Sep 08:00", "26 Sep 00:00", "30 Sep 16:00", "3 Oct 08:00", "8 Oct 00:00", "10 Oct 16:00", "15 Oct 08:00", "18 Oct 00:00"],
  body: bars(`1013,1040,1021 1016,1030,1022 966,1027,975 940,980,970 918,982,941 930,951,946 941,958,957 951,971,963 946,990,952 894,971,941 940,1010,983 978,995,991 980,993,982 960,984,969 963,1010,1008 876,1022,946 915,957,943 933,949,940 925,960,931 921,941,925
    888,928,889 856,896,865 816,868,850 837,867,861 846,872,858 846,872,855 840,870,846 837,875,849 804,858,817 801,820,813 804,828,814 807,834,832 697,832,748 745,788,760 715,765,720 697,727,715 693,720,701 693,717,703 700,752,745 730,765,737
    682,742,718 711,733,730 717,738,736 732,750,748 711,765,721 651,730,653 640,690,652 630,656,643 549,576,550,568 540,570,544 543,573,568 534,594,538 537,598,596 588,621,619 606,621,615 612,628,616 567,622,604 591,630,600 594,627,599 592,610,608
    600,615,610 600,624,604 534,607,535 514,543,523 522,541,530 291,534,316 306,350,328 312,348,341 318,398,395 376,418,401 369,465,452 438,460,454 443,466,446 432,450,440 407,448,441 438,504,485 460,509,475 456,476,474 465,500,470,490 450,472,471
    423,474,436 402,455,415 411,470,419 414,455,440 435,455,449 446,460,457 438,524,514 486,546,532 465,538,481 470,492,486 480,501,499 486,514,508 480,514,502 418,504,434 385,437,394 384,408,395 385,406,395 388,405,394 372,438,428 411,456,438
    438,492,468 440,476,450 432,452,445 426,455,428 327,432,412 342,416,373 321,380,341 315,345,317 270,321,288 279,294,292 288,333,297 280,336,297 243,330,267 249,273,267 255,270,268 189,270,200 174,237,208 177,216,202 189,255,246 237,261,250
    248,290,287 273,293,277 225,280,228 190,255,190 186,226,223 205,240,219 201,225,217 198,220,202 195,258,213 204,270,262 255,302,290 285,304,301 288,306,289 273,294,284 279,384,357 345,453,430 393,455,450 450,471,465 432,474,439 429,462,460
    400,462,403 375,429,376 370,420,373 370,385,379 367,390,373 372,408,403 385,441,418 351,468,354 339,406,397 381,402,391 342,395,377 376,417,411 402,531,520 507,585,580 555,591,558 531,594,543 532,552,548 545,594,592 534,597,565 552,582,562
    516,578,538 516,543,530 514,540,520 506,526,518 486,529,520 495,546,538 523,585,568 537,582,543 522,550,531 507,540,509 503,538,529 471,548,485 468,508,499 490,522,513 501,552,527 492,530,495 480,526,517 513,597,566 507,573,522 489,528,494
    489,530,523 507,533,524 420,528,456 435,477,471 462,621,586 528,588,553 532,564,535 507,548,521 375,525,384 342,420,355 279,363,297 288,315,295 291,318,316 303,318,307 228,310,229 216,277,273 255,300,291 282,300,291`) +
    curve(`64,1038 100,1020 125,1011 165,986 185,985 235,968 265,962 300,956 350,927 385,899 400,882 445,849 510,787 560,750 595,735 640,698 692,650 733,623 762,601 800,590 832,586 845,572 890,500 950,443 965,432 998,421 1025,440 1060,452 1095,452 1115,465 1170,471 1200,465 1260,456 1300,438 1312,433 1340,409 1400,373 1420,354 1465,294 1495,264 1525,260 1600,226 1635,243 1670,252 1690,273 1730,328 1770,372 1840,409 1875,396 1890,403 1930,444 1980,492 2020,525 2052,550 2105,541 2140,523 2175,520 2200,525 2225,517 2260,508 2290,519 2315,520 2335,500 2365,453 2380,438 2405,400 2426,376`, x => x / 3 - 17, "#f00")
});

draw("usdchf", {
  title: "USDCHF,H4  0.9021 0.9025 0.9018 0.9019",
  last: [667, "0.9019"],
  prices: [[136, "0.9470"], [238, "0.9385"], [337, "0.9300"], [436, "0.9215"], [535, "0.9130"], [635, "0.9045"], [736, "0.8960"]],
  times: ["4 Sep 2013", "6 Sep 16:00", "11 Sep 08:00", "16 Sep 00:00", "18 Sep 16:00", "23 Sep 08:00", "26 Sep 00:00", "30 Sep 16:00", "3 Oct 08:00", "8 Oct 00:00", "10 Oct 16:00", "15 Oct 08:00", "18 Oct 00:00"],
  sub: { title: "MACD(12,26,9) -0.00240 -0.00168", lines: [[883, SLATE]], labels: [[775, "0.00384"], [884, "0.00"], [1043, "-0.00546"]] },
  body: bars(`240,270,260 248,268,250 240,265,262 245,270,262 240,282,272 258,278,270 262,280,265 245,268,247 200,260,225 200,265,215 150,220,180 155,182,162 150,175,170 160,184,172 165,185,175 160,240,185 175,290,238 228,262,240 230,252,232 228,255,232
    228,262,258 250,292,285 285,335,318 305,328,310 300,318,303 300,318,308 282,316,295 258,298,280 272,298,283 275,300,284 275,296,282 255,292,258 250,305,290 285,302,288 285,330,327 320,357,335 325,345,340 328,348,338 312,345,320 295,330,315
    300,372,343 325,352,338 312,342,322 302,325,308 288,325,315 305,355,347 288,355,330 330,355,343 385,422,408,413 395,412,405 375,408,380 360,408,403 370,405,375 365,382,370 365,380,372 362,380,366 362,392,380 372,395,385 362,390,383 372,388,380
    372,390,382 372,392,383 372,390,375 372,398,380 372,408,402 400,555,550 525,560,548 540,555,550 538,585,578 540,582,550 540,580,568 545,575,563 550,580,567 550,572,565 555,578,567 540,580,568 555,585,572 530,590,572 560,592,565 545,570,552
    535,570,552 545,590,583 550,585,568 555,572,563 550,572,563 550,572,558 540,568,545 530,560,540 530,562,545 535,550,537 528,545,532 528,540,529 525,562,560 550,568,560 555,598,585 570,595,580 572,585,576 560,582,574 565,585,573 565,585,567
    552,582,558 550,575,567 560,578,570 562,582,577 575,600,594 585,652,640 615,665,620 615,632,625 615,635,623 615,635,627 605,640,632 620,660,655 625,655,635 625,645,633 618,635,620 615,655,650 640,698,652 625,655,632 600,640,612 605,628,612
    590,632,602 598,625,613 610,652,645 640,680,672 650,695,657 652,665,658 652,668,660 655,685,678 650,690,665 655,675,658 645,728,697 685,708,700 692,712,706 698,715,710 675,718,678 645,682,647 590,650,602 592,612,608 602,632,622 615,640,628
    628,670,652 640,672,655 610,655,645 640,660,650 640,662,645 610,650,632 612,640,632 612,645,635 630,652,638 632,652,642 632,672,637 612,642,618 570,625,580 540,590,572 535,580,570 545,580,570 545,580,550 535,555,543 540,570,568 550,595,560
    540,580,553 545,570,555 550,570,560 555,585,562 560,600,592 585,608,590 540,595,545 540,568,560 555,580,570 562,580,572 540,580,550 550,615,608 590,612,592 565,600,568 550,575,560 560,572,555 540,580,550 480,560,500 490,525,512 505,550,545
    515,555,520 510,535,518 512,560,555 545,575,560 485,565,512 510,548,530 525,545,538 530,550,540 538,645,625 620,670,658 650,678,660 650,670,660 640,668,648 645,655,650 645,662,657 645,683,655 650,675,663 655,670,665`) +
    histogram("0,793 3,800 6,815 8,810 11,795 15,790 17,808 19,835 22,875 23,886 24,900 26,908 29,906 32,900 34,912 37,932 41,928 45,922 48,940 51,955 54,945 58,930 63,925 65,960 68,1025 70,1040 73,1045 76,1035 80,1018 84,990 88,950 92,925 98,932 103,918 108,942 112,952 117,945 121,922 126,938 130,942 133,950 136,920 138,893 144,888 148,886 151,880 153,855 157,825 160,818 163,828 168,842 173,858 178,838 182,835 187,850 190,905 194,945 197,960", 883) +
    curve("0,792 3,793 8,803 12,797 15,782 20,795 25,860 31,905 36,912 42,930 49,930 56,950 62,940 65,937 69,970 75,1040 79,1042 84,1010 90,960 95,935 102,926 109,932 114,948 119,945 123,935 128,930 134,943 140,920 144,895 150,885 155,868 160,830 164,820 170,835 177,853 183,840 187,838 190,860 196,930", i => LEFT + 4 * i, "#f00", 'stroke-dasharray="3 2"')
});

draw("usdjpy", {
  title: "USDJPY,H4  97.88 97.91 97.81 97.85",
  last: [448, "97.85"],
  prices: [[136, "99.25"], [235, "98.80"], [337, "98.35"], [436, "97.90"], [535, "97.45"], [637, "97.00"], [736, "96.55"]],
  times: ["26 Sep 2013", "27 Sep 20:00", "1 Oct 04:00", "2 Oct 12:00", "3 Oct 20:00", "7 Oct 04:00", "8 Oct 12:00", "9 Oct 20:00", "11 Oct 04:00", "14 Oct 12:00", "15 Oct 20:00", "17 Oct 04:00", "18 Oct 12:00"],
  sub: { title: "CCI(14) -56.3405", lines: [[835, "#c8c8c8"], [904, SLATE], [973, "#c8c8c8"]], labels: [[775, "209.1494"], [835, "100"], [904, "0.00"], [973, "-100"], [1043, "-228.763"]] },
  body: candles(`192,208,265,303,0 162,180,208,222,0 172,180,196,242,1 182,196,200,228,1 200,202,272,275,1 238,270,275,303,1 258,274,319,340,1 290,319,335,372,1 330,332,362,396,1 430,468,496,498,0
    402,427,469,485,0 414,427,443,457,1 430,442,493,527,1 330,367,493,498,0 312,366,368,378,0 303,331,368,374,0 246,331,374,415,1 371,373,409,454,1 372,408,410,492,0 348,405,410,458,0
    362,406,416,458,1 392,407,416,432,0 404,406,469,490,1 460,469,562,578,1 498,556,562,584,0 525,534,556,606,0 510,534,558,568,1 526,556,560,582,0 480,482,556,560,0 441,460,482,500,0
    441,460,491,522,1 485,491,583,653,1 552,580,584,610,0 544,580,608,612,1 567,577,607,636,0 575,577,598,648,1 580,598,602,622,0 536,559,601,640,0 528,535,559,567,0 562,592,596,605,0
    588,592,607,632,1 598,607,652,668,1 632,652,661,680,1 586,658,662,680,0 640,658,703,710,1 685,694,703,735,0 605,622,695,710,0 594,622,628,628,1 580,595,628,644,0 594,595,652,672,1
    624,652,667,675,1 592,610,667,675,0 544,565,610,612,0 531,559,563,590,0 531,559,565,595,1 555,565,577,611,1 492,559,577,582,0 502,505,562,566,0 457,457,506,508,0 447,454,457,495,0
    387,394,454,498,0 362,391,396,430,0 354,382,392,400,0 338,346,379,431,0 290,322,346,358,0 306,322,346,358,1 338,346,350,370,0 288,304,349,362,0 282,292,304,318,0 338,346,361,390,0
    342,346,356,358,1 345,346,352,368,0 345,346,382,395,1 342,346,382,392,0 285,289,346,348,0 258,294,298,302,0 286,298,313,325,1 290,292,310,334,0 261,292,301,316,1 258,283,301,328,0
    280,283,376,416,1 274,295,376,388,0 280,294,297,346,0 292,295,328,342,1 296,298,328,362,0 198,229,298,305,0 220,232,248,286,1 189,241,248,254,0 226,241,292,332,1 288,292,421,459,1
    396,421,431,468,1 424,430,440,474,1 424,436,440,455,0 378,391,440,444,0 385,391,409,440,1 400,409,493,496,1 445,454,494,512,0 432,439,454,489,0 432,439,448,458,1`) +
    curve("0,860 1,772 2,820 3,832 4,895 5,932 6,966 7,990 8,1002 9,1047 10,998 11,988 12,988 13,940 14,912 15,898 16,895 17,934 18,938 19,912 20,930 21,910 22,965 23,1039 24,1025 25,1001 26,978 27,973 28,932 29,900 30,907 31,976 32,969 33,969 34,967 35,982 36,968 37,932 38,886 39,944 40,965 41,990 42,1006 43,980 44,1030 45,1015 46,935 47,900 48,880 49,922 50,938 51,890 52,792 53,780 54,812 55,848 56,820 57,813 58,790 59,797 60,787 61,792 62,808 63,823 64,812 65,828 66,847 67,838 68,836 69,874 70,877 71,882 72,916 73,910 74,818 75,800 76,850 77,857 78,842 79,844 80,955 81,893 82,868 83,894 84,899 85,772 86,793 87,783 88,862 89,1030 90,1046 91,1022 92,985 93,952 94,949 95,972 96,967 97,954 98,943", i => LEFT + 8 * i, "#20b2aa")
});
```
